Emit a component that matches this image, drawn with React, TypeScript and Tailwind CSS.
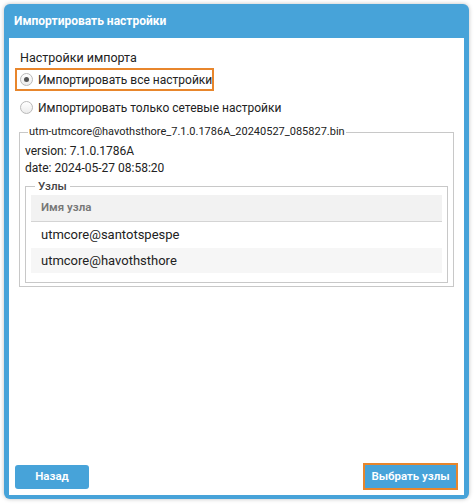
import React from "react";

function Radio({ checked }: { checked?: boolean }) {
  return (
    <span className="flex h-[13px] w-[13px] shrink-0 items-center justify-center rounded-full border border-[#b9b9b9] bg-gradient-to-b from-white to-[#ececec]">
      {checked && <span className="h-[5px] w-[5px] rounded-full bg-[#555]" />}
    </span>
  );
}

export default function App() {
  return (
    <div className="h-[504px] w-[474px] bg-white p-[4px] font-['Roboto',sans-serif] text-[#222]">
      <div className="flex h-[495px] w-[465px] flex-col rounded-[6px] bg-[#47a3d9] shadow-[0_0_4px_rgba(0,0,0,0.25)]">
        {/* Title */}
        <div className="flex h-[34px] shrink-0 items-center px-[10px] text-[12px] font-bold text-white">
          Импортировать настройки
        </div>

        {/* Body */}
        <div className="mx-[5px] mb-[4px] flex flex-1 flex-col bg-white px-[6px] pt-[12px] pb-[5px]">
          <div className="pl-[5px] text-[12.5px] leading-[16px]">Настройки импорта</div>

          <label className="mt-[2px] flex h-[23px] w-[199px] items-center gap-[5px] whitespace-nowrap border-2 border-[#e8862c] pl-[3px] text-[12px]">
            <Radio checked />
            Импортировать все настройки
          </label>

          <label className="mt-[5px] flex h-[23px] items-center gap-[5px] whitespace-nowrap pl-[5px] text-[12px]">
            <Radio />
            Импортировать только сетевые настройки
          </label>

          {/* File fieldset */}
          <fieldset className="mx-[4px] mt-[6px] border border-[#c8c8c8] px-[5px] pb-[3px]">
            <legend className="ml-[3px] px-[1px] text-[11px] leading-[14px]">
              utm-utmcore@havothsthore_7.1.0.1786A_20240527_085827.bin
            </legend>
            <div className="pt-[4px] text-[12px] leading-[17px]">version: 7.1.0.1786A</div>
            <div className="text-[12px] leading-[17px]">date: 2024-05-27 08:58:20</div>

            <fieldset className="mt-[2px] border border-[#c8c8c8] px-[5px] pb-[9px]">
              <legend className="ml-[4px] px-[3px] text-[11.5px] font-medium leading-[14px] text-[#444]">
                Узлы
              </legend>
              <div className="mt-[2px] flex h-[27px] items-center border-b border-[#d4d4d4] bg-[#f2f2f2] pl-[10px] text-[11.5px] font-semibold text-[#777]">
                Имя узла
              </div>
              <div className="flex h-[26px] items-center pl-[10px] text-[13px]">utmcore@santotspespe</div>
              <div className="flex h-[25px] items-center bg-[#f6f6f6] pl-[10px] text-[13px]">utmcore@havothsthore</div>
            </fieldset>
          </fieldset>

          {/* Footer buttons */}
          <div className="mt-auto flex items-center justify-between">
            <button className="h-[24px] w-[74px] rounded-[3px] bg-[#47a3d9] text-[11.5px] font-semibold text-white">
              Назад
            </button>
            <button className="h-[27px] w-[95px] border-2 border-[#e8862c] bg-[#47a3d9] text-[11.5px] font-semibold text-white">
              Выбрать узлы
            </button>
          </div>
        </div>
      </div>
    </div>
  );
}
